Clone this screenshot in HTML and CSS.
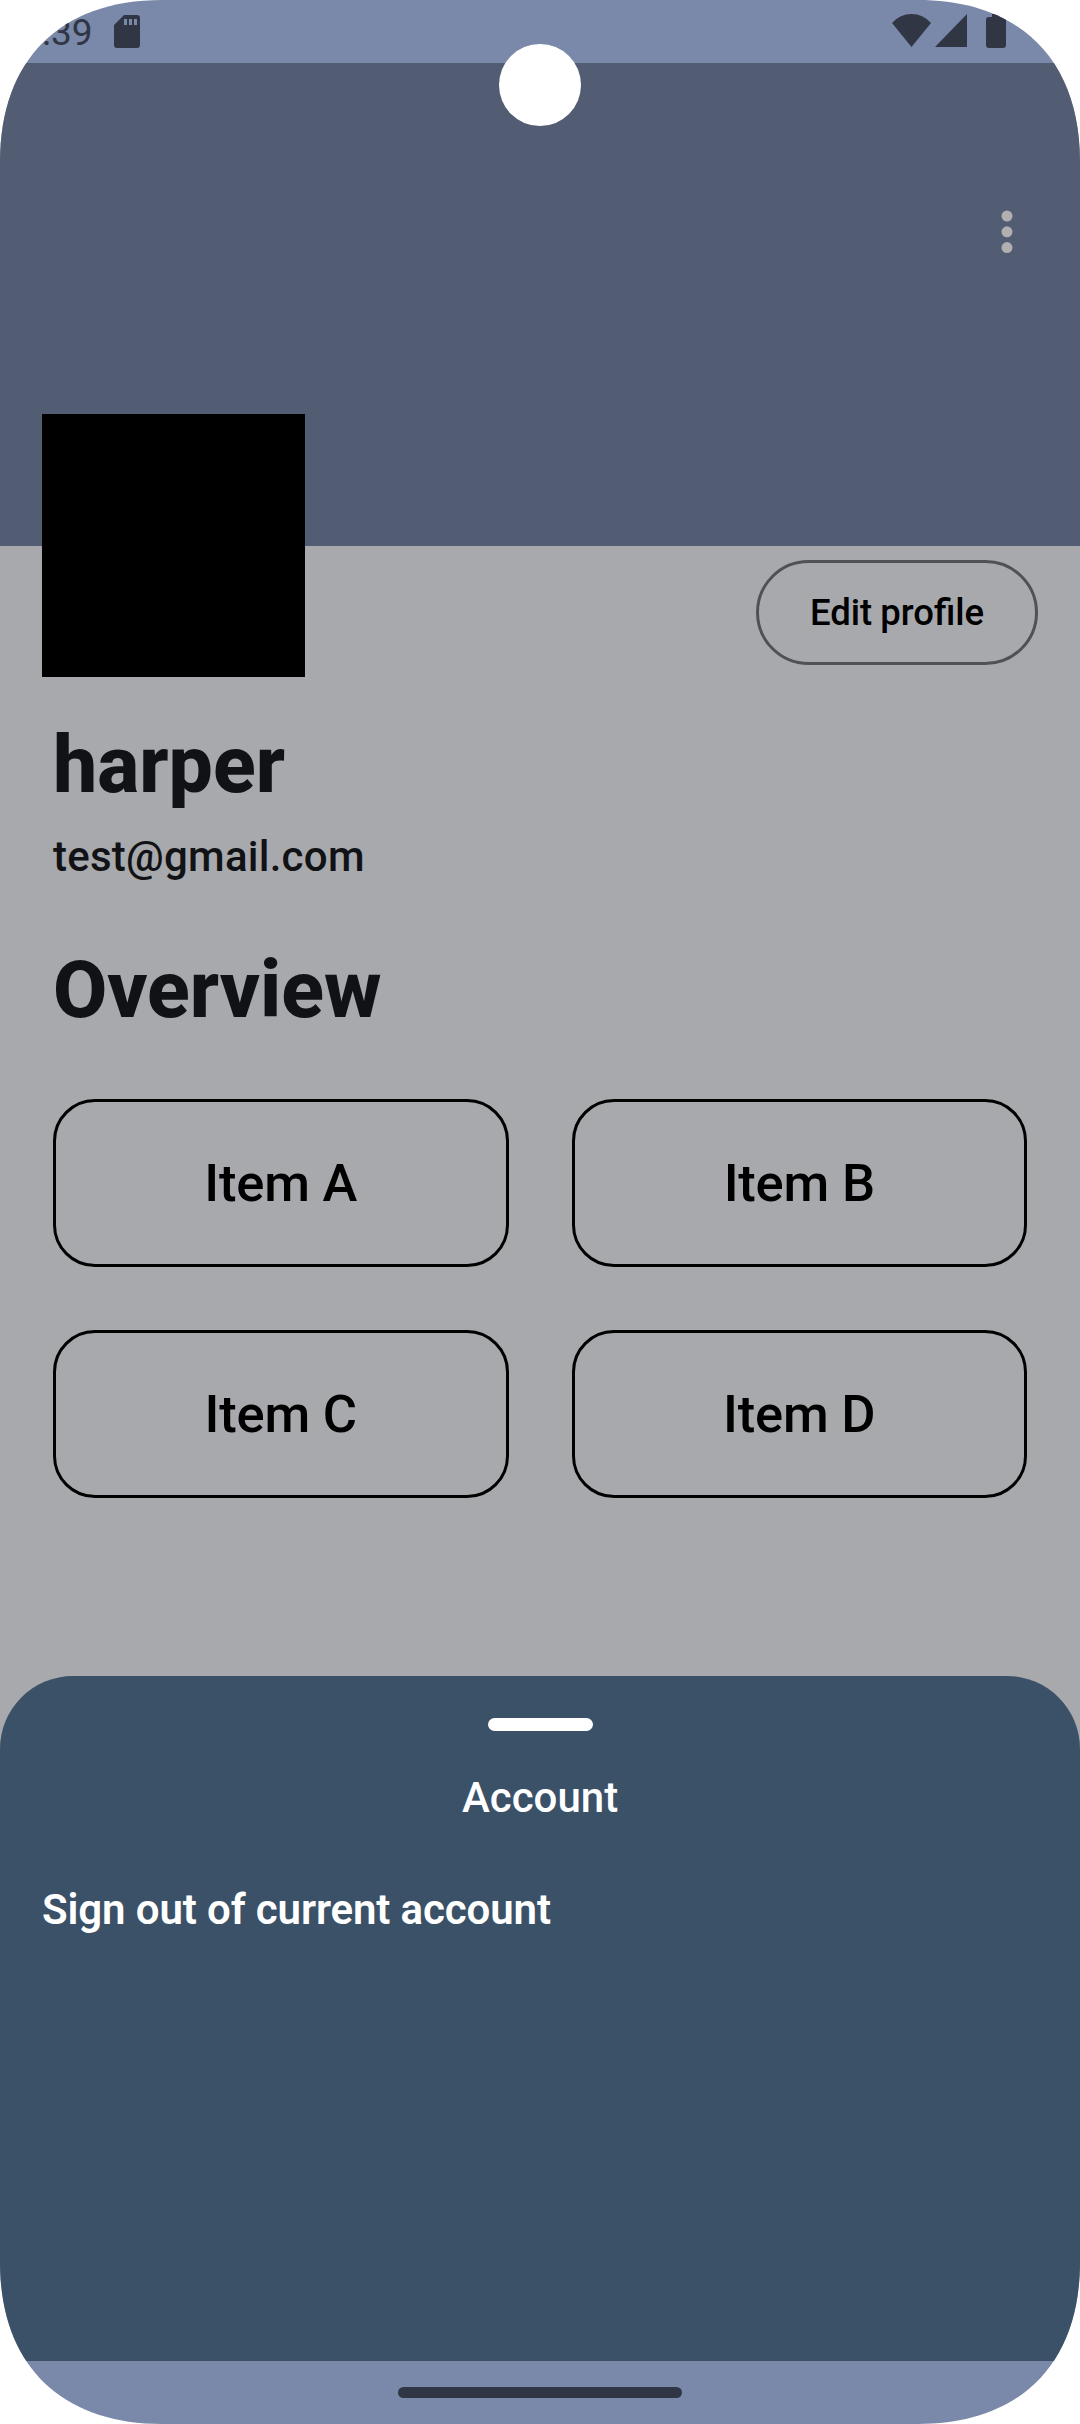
FILE: index.html
```html
<!DOCTYPE html>
<html lang="en">
<head>
<meta charset="utf-8">
<title>Profile</title>
<link rel="stylesheet" href="styles.css">
</head>
<body>
<div class="screen">
  <header class="status-bar">
    <span class="time">:39</span>
    <svg class="sd-card" width="26" height="33" viewBox="0 0 26 33"><path fill-rule="evenodd" d="M10 0H23a3 3 0 0 1 3 3V30a3 3 0 0 1-3 3H3a3 3 0 0 1-3-3V10ZM10 4V10h3V4ZM15 4V10h3V4ZM20 4V10h3V4Z"/></svg>
    <svg class="signals" width="114" height="34" viewBox="0 0 114 34"><path d="M0 9Q8 0 19.500 0T39 9L19.500 33ZM43 33L75 0V33ZM100 0h8v3h3a3 3 0 0 1 3 3V31a3 3 0 0 1-3 3H97a3 3 0 0 1-3-3V6a3 3 0 0 1 3-3h3Z"/></svg>
  </header>
  <div class="camera"></div>
  <div class="app">
    <div class="banner">
      <svg class="more" width="12" height="44" viewBox="0 0 12 44"><circle cx="6" cy="6" r="5.500"/><circle cx="6" cy="21.800" r="5.500"/><circle cx="6" cy="37.600" r="5.500"/></svg>
    </div>
    <main class="profile">
      <div class="profile-top">
        <div class="avatar"></div>
        <button class="edit">Edit profile</button>
      </div>
      <h1 class="name">harper</h1>
      <p class="email">test@gmail.com</p>
      <h2 class="overview">Overview</h2>
      <div class="items">
        <button class="item">Item A</button>
        <button class="item">Item B</button>
        <button class="item">Item C</button>
        <button class="item">Item D</button>
      </div>
    </main>
    <section class="sheet">
      <div class="handle"></div>
      <h3 class="sheet-title">Account</h3>
      <p class="sheet-action">Sign out of current account</p>
    </section>
  </div>
  <footer class="nav-bar"><div class="nav-pill"></div></footer>
</div>
</body>
</html>
```
FILE: styles.css
```css
* { box-sizing: border-box; }
body { margin: 0; background: #fff; font-family: Roboto, sans-serif; }
h1, h2, h3, p { margin: 0; }
button { background: none; font: inherit; color: #000; padding: 0; }

.screen {
  position: relative;
  display: flex;
  flex-direction: column;
  width: 1080px;
  height: 2424px;
  clip-path: path("M0 162C0 60 60 0 162 0H918C1020 0 1080 60 1080 162V2262C1080 2364 1020 2424 918 2424H162C60 2424 0 2364 0 2262Z");
}

.status-bar {
  display: flex;
  align-items: flex-start;
  height: 63px;
  padding: 14px 74px 0 42px;
  background: #7a88a9;
  color: #303644;
  fill: #303644;
}
.time { width: 50px; font-size: 37px; line-height: 38px; }
.sd-card { margin: 1px 0 0 22px; }
.signals { margin-left: auto; }

.camera {
  position: absolute;
  left: 499px;
  top: 44px;
  width: 82px;
  height: 82px;
  border-radius: 50%;
  background: #fff;
}

.app { flex: 1; display: flex; flex-direction: column; background: #a8a9ac; }
.banner {
  display: flex;
  justify-content: flex-end;
  align-items: flex-start;
  height: 483px;
  padding: 147px 67.5px 0 0;
  background: #525d74;
}
.more { fill: #b0b0b0; }

.profile { height: 1130px; padding: 0 53px; }
.profile-top {
  display: flex;
  justify-content: space-between;
  align-items: flex-start;
  height: 131px;
  margin: 0 -11px;
}
.avatar { width: 263px; height: 263px; margin-top: -132px; background: #000; }
.edit {
  width: 282px;
  height: 105px;
  margin-top: 14px;
  border: 3px solid #505155;
  border-radius: 53px;
  font-size: 36.5px;
  font-weight: 500;
  word-spacing: -1px;
}
.name, .overview { font-size: 78.75px; line-height: 92px; font-weight: 800; color: #111216; }
.name { margin-top: 42px; }
.email { margin-top: 21px; font-size: 42px; line-height: 49px; font-weight: 500; letter-spacing: 0.25px; color: #111216; }
.overview { margin-top: 63px; }
.items {
  display: grid;
  grid-template-columns: 1fr 1fr;
  grid-auto-rows: 168px;
  gap: 63px;
  margin-top: 63px;
}
.item { border: 3px solid #000; border-radius: 42px; font-size: 52.5px; font-weight: 500; letter-spacing: -0.2px; }

.sheet {
  flex: 1;
  display: flex;
  flex-direction: column;
  padding: 42px;
  border-radius: 73px 73px 0 0;
  background: #3b5168;
  color: #fff;
}
.handle { width: 105px; height: 13px; border-radius: 6.5px; background: #fff; align-self: center; }
.sheet-title { margin-top: 42px; text-align: center; font-size: 42px; line-height: 49px; font-weight: 500; }
.sheet-action { margin-top: 63px; font-size: 42px; line-height: 49px; font-weight: 600; letter-spacing: -0.12px; }

.nav-bar { display: flex; justify-content: center; height: 63px; padding-top: 26px; background: #7a88a9; }
.nav-pill { width: 284px; height: 11px; border-radius: 5.5px; background: #303644; }
```
